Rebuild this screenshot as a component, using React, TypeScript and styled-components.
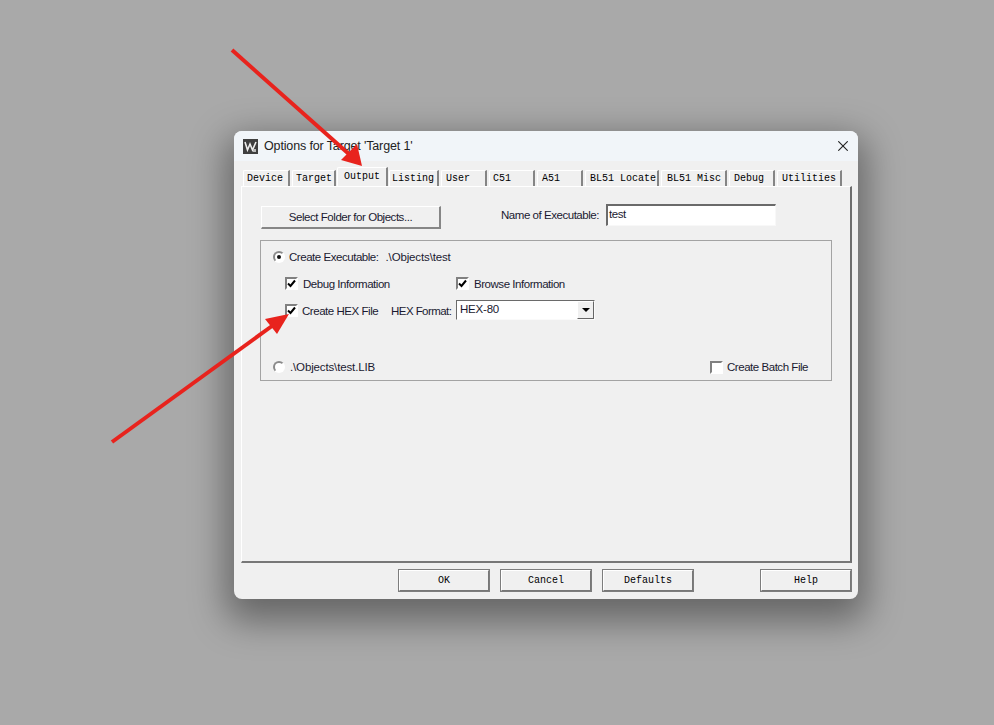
import React from "react";
import styled, { createGlobalStyle, css } from "styled-components";

const Global = createGlobalStyle`
  html, body { margin: 0; padding: 0; height: 100%; overflow: hidden; background: #a9a9a9; }
  #root { height: 100%; }
`;

const Page = styled.div`
  position: relative;
  box-sizing: border-box;
  width: 994px;
  height: 725px;
  padding: 131px 0 0 234px;
  background: #a9a9a9;
  font-family: "Liberation Sans", Arial, sans-serif;
  font-size: 11.5px;
  letter-spacing: -0.46px;
  color: #1a1a30;
`;

const Window = styled.div`
  display: flex;
  flex-direction: column;
  width: 624px;
  height: 468px;
  border-radius: 8px;
  overflow: hidden;
  background: #f0f0f0;
  box-shadow: 0 14px 36px 8px rgba(0, 0, 0, 0.4);
`;

const TitleBar = styled.div`
  display: flex;
  align-items: center;
  flex: none;
  height: 30px;
  padding: 0 10px 0 9px;
  background: #f1f5f9;
`;

const AppIcon = styled.svg`
  width: 15px;
  height: 15px;
  flex: none;
`;

const Title = styled.div`
  flex: 1;
  margin-left: 6px;
  font-size: 12.5px;
  letter-spacing: -0.14px;
  color: #222;
`;

const CloseIcon = styled.svg`
  width: 10px;
  height: 10px;
  flex: none;
`;

const TabStrip = styled.div`
  display: flex;
  align-items: flex-end;
  gap: 2px;
  flex: none;
  height: 19px;
  margin-top: 6px;
  padding-left: 9px;
  font-family: "Liberation Mono", monospace;
  font-size: 10px;
  letter-spacing: 0;
  color: #000;
`;

const Tab = styled.div<{ $w: number; $inset?: number; $active?: boolean }>`
  box-sizing: border-box;
  width: ${(p) => p.$w}px;
  height: 16px;
  padding: 1px 0 0 ${(p) => p.$inset ?? 4}px;
  line-height: 14px;
  white-space: nowrap;
  background: #f0f0f0;
  border-top: 1px solid #fff;
  border-left: 1px solid #fff;
  border-right: 2px solid #858585;
  border-top-left-radius: 2px;
  ${(p) =>
    p.$active &&
    css`
      height: 19px;
      margin: 0 -1px;
      padding-top: 2px;
      position: relative;
      z-index: 1;
    `}
`;

const Panel = styled.div`
  box-sizing: border-box;
  flex: none;
  width: 611px;
  height: 377px;
  margin-left: 7px;
  padding: 17px 0 0 19px;
  background: #f0f0f0;
  border-top: 1px solid #fff;
  border-left: 1px solid #fff;
  border-right: 2px solid #6e6e6e;
  border-bottom: 2px solid #777;
`;

const TopRow = styled.div`
  display: flex;
  align-items: flex-start;
  height: 25px;
`;

const FolderButton = styled.div`
  box-sizing: border-box;
  width: 180px;
  height: 23px;
  margin-top: 2px;
  text-align: center;
  line-height: 21px;
  background: #f0f0f0;
  border: 1px solid #fff;
  border-right: 2px solid #868686;
  border-bottom: 2px solid #868686;
`;

const NameLabel = styled.div`
  margin-left: 60px;
  width: 105px;
  line-height: 22px;
`;

const NameInput = styled.div`
  box-sizing: border-box;
  width: 170px;
  height: 22px;
  padding-left: 1px;
  line-height: 16px;
  background: #fff;
  border: 1px solid #f8f8f8;
  border-top: 2px solid #6a6a6a;
  border-left: 2px solid #6a6a6a;
`;

const Group = styled.div`
  box-sizing: border-box;
  display: flex;
  flex-direction: column;
  width: 572px;
  height: 141px;
  margin: 11px 0 0 -1px;
  border: 1px solid #a3a3a3;
`;

const Row = styled.div<{ $h: number; $pad: number; $top?: number }>`
  display: flex;
  align-items: center;
  flex: none;
  height: ${(p) => p.$h}px;
  margin-top: ${(p) => p.$top ?? 0}px;
  padding-left: ${(p) => p.$pad}px;
  white-space: pre;
`;

const Cell = styled.div<{ $w?: number; $drop?: number }>`
  box-sizing: border-box;
  display: flex;
  align-items: center;
  flex: none;
  padding-top: ${(p) => p.$drop ?? 0}px;
  ${(p) => (p.$w ? `width: ${p.$w}px;` : "")}
`;

const FilePath = styled.span<{ $left?: number }>`
  margin-left: ${(p) => p.$left ?? 0}px;
  letter-spacing: -0.14px;
`;

const FormatLabel = styled.span`
  letter-spacing: -0.55px;
`;

const Box = styled.span<{ $gap?: number }>`
  box-sizing: border-box;
  display: flex;
  align-items: center;
  justify-content: center;
  flex: none;
  width: 13px;
  height: 13px;
  margin-right: ${(p) => p.$gap ?? 5}px;
  background: #fff;
  border: 2px solid #fff;
  border-top-color: #808080;
  border-left-color: #808080;
`;

const Radio = styled.span<{ $on?: boolean; $gap?: number }>`
  box-sizing: border-box;
  display: flex;
  align-items: center;
  justify-content: center;
  flex: none;
  width: 12px;
  height: 12px;
  margin-right: ${(p) => p.$gap ?? 5}px;
  border-radius: 50%;
  background: #fff;
  border: 2px solid #fff;
  border-top-color: #8a8a8a;
  border-left-color: #8a8a8a;
  &::after {
    content: "";
    display: ${(p) => (p.$on ? "block" : "none")};
    width: 4px;
    height: 4px;
    border-radius: 50%;
    background: #111;
  }
`;

const CheckMark = styled.svg`
  width: 9px;
  height: 9px;
  flex: none;
`;

const Combo = styled.div`
  box-sizing: border-box;
  display: flex;
  align-items: stretch;
  width: 139px;
  height: 20px;
  background: #fff;
  border: 1px solid #fafafa;
  border-top: 1px solid #6a6a6a;
  border-left: 1px solid #6a6a6a;
`;

const ComboText = styled.div`
  flex: 1;
  padding: 1px 0 0 3px;
  line-height: 15px;
  letter-spacing: -0.2px;
`;

const ComboArrow = styled.div`
  box-sizing: border-box;
  display: flex;
  align-items: center;
  justify-content: center;
  width: 17px;
  background: #f0f0f0;
  border: 1px solid #fff;
  border-right: 1px solid #666;
  border-bottom: 1px solid #666;
  &::after {
    content: "";
    border-left: 4px solid transparent;
    border-right: 4px solid transparent;
    border-top: 4px solid #000;
  }
`;

const Spacer = styled.div`
  flex: 1;
`;

const Footer = styled.div`
  display: flex;
  gap: 10px;
  flex: none;
  padding: 6px 0 0 164px;
`;

const FooterButton = styled.div<{ $gapLeft?: number }>`
  box-sizing: border-box;
  width: 92px;
  height: 23px;
  margin-left: ${(p) => p.$gapLeft ?? 0}px;
  text-align: center;
  line-height: 19px;
  font-family: "Liberation Mono", monospace;
  font-size: 10px;
  letter-spacing: 0;
  color: #000;
  background: #f0f0f0;
  border: 2px solid #fff;
  border-right-color: #777;
  border-bottom-color: #777;
  outline: 1px solid #7d7d7d;
  outline-offset: -1px;
`;

const Overlay = styled.svg`
  position: absolute;
  inset: 0;
  width: 994px;
  height: 725px;
  pointer-events: none;
`;

const Check = () => (
  <CheckMark viewBox="0 0 9 9">
    <path d="M1 4.5 L3.5 7 L8 1.5" fill="none" stroke="#000" strokeWidth="2" />
  </CheckMark>
);

const tabs: [string, number, number][] = [
  ["Device", 47, 3],
  ["Target", 44, 3],
  ["Output", 51, 6],
  ["Listing", 50, 2],
  ["User", 46, 4],
  ["C51", 46, 3],
  ["A51", 46, 4],
  ["BL51 Locate", 74, 4],
  ["BL51 Misc", 66, 5],
  ["Debug", 46, 4],
  ["Utilities", 65, 4],
];

export default function App() {
  return (
    <Page>
      <Global />
      <Window>
        <TitleBar>
          <AppIcon viewBox="0 0 15 15">
            <rect width="15" height="15" fill="#3f3f3f" />
            <path d="M2 3 L4.5 11 L7 5 L9.5 11 L13 3" fill="none" stroke="#eee" strokeWidth="1.6" />
            <rect x="10" y="10" width="3" height="3" fill="#bbb" />
          </AppIcon>
          <Title>Options for Target 'Target 1'</Title>
          <CloseIcon viewBox="0 0 10 10">
            <path d="M0.3 0.3 L9.7 9.7 M9.7 0.3 L0.3 9.7" stroke="#222" strokeWidth="1.1" />
          </CloseIcon>
        </TitleBar>
        <TabStrip>
          {tabs.map(([label, w, inset]) => (
            <Tab key={label} $w={w} $inset={inset} $active={label === "Output"}>
              {label}
            </Tab>
          ))}
        </TabStrip>
        <Panel>
          <TopRow>
            <FolderButton>Select Folder for Objects...</FolderButton>
            <NameLabel>Name of Executable:</NameLabel>
            <NameInput>test</NameInput>
          </TopRow>
          <Group>
            <Row $h={32} $pad={12}>
              <Radio $on $gap={4} />
              Create Executable:
              <FilePath $left={7}>.\Objects\test</FilePath>
            </Row>
            <Row $h={21} $pad={24}>
              <Cell $w={171}>
                <Box>
                  <Check />
                </Box>
                Debug Information
              </Cell>
              <Cell>
                <Box>
                  <Check />
                </Box>
                Browse Information
              </Cell>
            </Row>
            <Row $h={22} $pad={24} $top={5}>
              <Cell $w={106} $drop={1}>
                <Box $gap={4}>
                  <Check />
                </Box>
                Create HEX File
              </Cell>
              <Cell $w={65} $drop={1}>
                <FormatLabel>HEX Format:</FormatLabel>
              </Cell>
              <Combo>
                <ComboText>HEX-80</ComboText>
                <ComboArrow />
              </Combo>
            </Row>
            <Row $h={20} $pad={12} $top={36}>
              <Radio />
              <FilePath>.\Objects\test.LIB</FilePath>
              <Spacer />
              <Cell $w={121}>
                <Box $gap={4}>{null}</Box>
                Create Batch File
              </Cell>
            </Row>
          </Group>
        </Panel>
        <Footer>
          <FooterButton>OK</FooterButton>
          <FooterButton>Cancel</FooterButton>
          <FooterButton>Defaults</FooterButton>
          <FooterButton $gapLeft={56}>Help</FooterButton>
        </Footer>
      </Window>
      <Overlay viewBox="0 0 994 725">
        <line x1="232" y1="50" x2="350" y2="155" stroke="#e8231d" strokeWidth="4" />
        <polygon points="362,166 341,160 357,144" fill="#e8231d" />
        <line x1="112" y1="442" x2="272" y2="326" stroke="#e8231d" strokeWidth="4" />
        <polygon points="289,314 265,319 277,334" fill="#e8231d" />
      </Overlay>
    </Page>
  );
}
